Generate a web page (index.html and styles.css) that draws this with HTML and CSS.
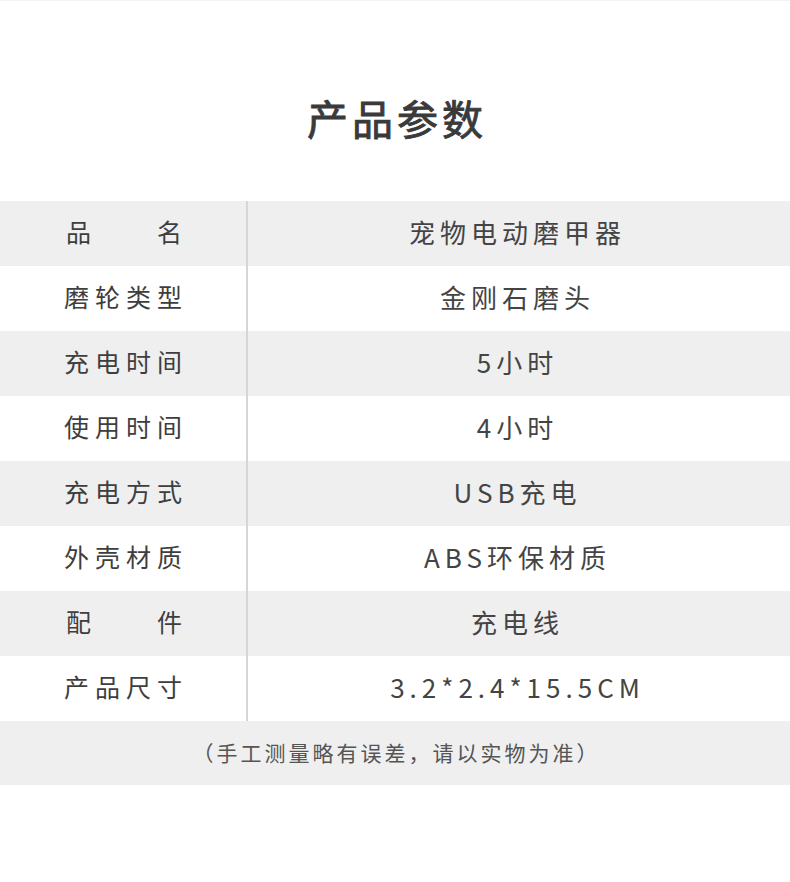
FILE: index.html
```html
<!DOCTYPE html>
<html lang="zh">
<head>
<meta charset="utf-8">
<title>产品参数</title>
<link rel="stylesheet" href="styles.css">
</head>
<body>
<div class="page">
  <header class="head">
    <h1 class="title">产品参数</h1>
  </header>
  <div class="table">
    <div class="row gray"><div class="label spread"><span>品</span><span>名</span></div><div class="value">宠物电动磨甲器</div></div>
    <div class="row"><div class="label">磨轮类型</div><div class="value">金刚石磨头</div></div>
    <div class="row gray"><div class="label">充电时间</div><div class="value">5小时</div></div>
    <div class="row"><div class="label">使用时间</div><div class="value">4小时</div></div>
    <div class="row gray"><div class="label">充电方式</div><div class="value">USB充电</div></div>
    <div class="row"><div class="label">外壳材质</div><div class="value">ABS环保材质</div></div>
    <div class="row gray"><div class="label spread"><span>配</span><span>件</span></div><div class="value">充电线</div></div>
    <div class="row"><div class="label">产品尺寸</div><div class="value">3.2*2.4*15.5CM</div></div>
  </div>
  <div class="note">（手工测量略有误差，请以实物为准）</div>
</div>
</body>
</html>
```
FILE: styles.css
```css
html, body {
  margin: 0;
  padding: 0;
  background: #ffffff;
}
body {
  font-family: "Noto Sans CJK SC", "Noto Sans", sans-serif;
  color: #444444;
}
.page {
  width: 790px;
  height: 882px;
  border-top: 1px solid #f4f4f4;
  box-sizing: border-box;
}
.head {
  height: 200px;
  display: flex;
  justify-content: center;
  align-items: center;
  padding-top: 36px;
  padding-bottom: 4px;
  box-sizing: border-box;
}
.title {
  margin: 0;
  font-size: 41px;
  font-weight: 400;
  -webkit-text-stroke: 0.9px #3a3a3a;
  letter-spacing: 4px;
  margin-right: -4px;
  color: #3a3a3a;
  line-height: 1;
}
.table {
  display: flex;
  flex-direction: column;
}
.row {
  display: grid;
  grid-template-columns: 248px 1fr;
  height: 65px;
}
.row.gray {
  background: #efefef;
}
.label {
  border-right: 2px solid #d6d6d6;
  display: flex;
  justify-content: center;
  align-items: center;
  font-size: 25px;
  letter-spacing: 6px;
  padding-left: 6px;
  padding-bottom: 5px;
  color: #3e3e3e;
}
.label.spread {
  justify-content: space-between;
  padding: 0 64px 5px 66px;
  letter-spacing: 0;
}
.value {
  display: flex;
  justify-content: center;
  align-items: center;
  font-size: 26px;
  letter-spacing: 5px;
  padding-right: 3px;
  padding-bottom: 5px;
  color: #444444;
}
.note {
  height: 61px;
  background: #efefef;
  display: flex;
  justify-content: center;
  align-items: center;
  font-size: 21px;
  letter-spacing: 3px;
  padding-left: 3px;
  padding-bottom: 3px;
  color: #555555;
}
```
